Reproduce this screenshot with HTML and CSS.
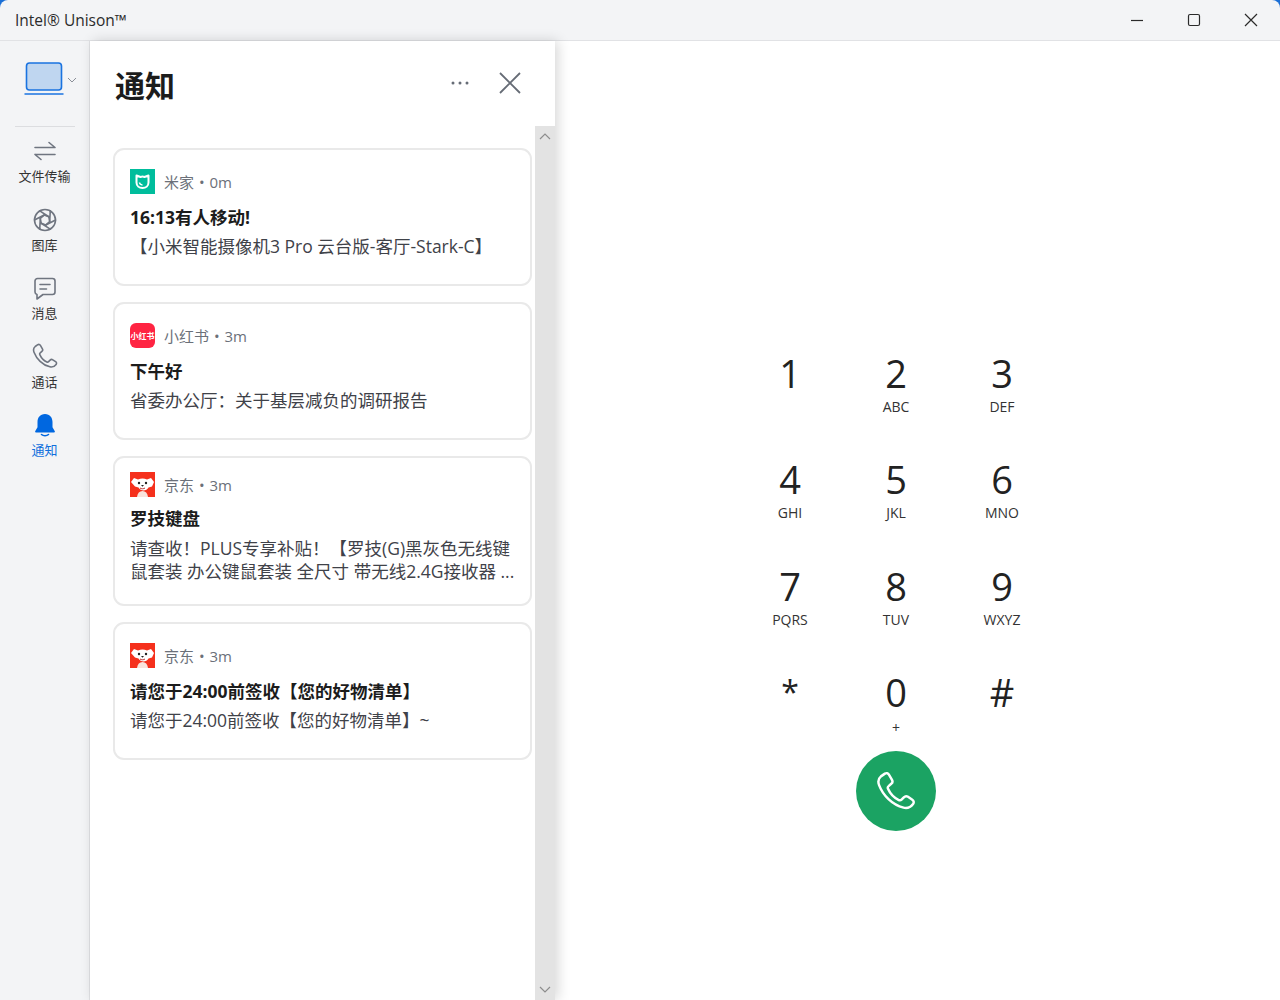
FILE: index.html
```html
<!doctype html>
<html lang="zh-CN">
  <head>
    <meta charset="utf-8">
    <title>Intel® Unison™</title>
    <link rel="stylesheet" href="styles.css">
  </head>
  <body>
    <div class="window">
      <header class="titlebar">
        <span class="app-title">Intel® Unison™</span>
        <div class="win-controls">
          <button class="win-btn" type="button">
            <svg width="14" height="14" viewBox="0 0 14 14"><path d="M1 7.5h12" /></svg>
          </button>
          <button class="win-btn" type="button">
            <svg width="14" height="14" viewBox="0 0 14 14"><rect x="1.5" y="1.5" width="11" height="11" rx="1.5" /></svg>
          </button>
          <button class="win-btn" type="button">
            <svg width="14" height="14" viewBox="0 0 14 14"><path d="M1 1l12 12M13 1L1 13" /></svg>
          </button>
        </div>
      </header>

      <div class="main">
        <!-- left rail -->
        <nav class="rail">
          <div class="device">
            <svg width="40" height="34" viewBox="0 0 40 34">
              <rect x="2.5" y="2" width="35" height="27" rx="3" fill="#bfd6f0" stroke="#1a73e0" stroke-width="1.6" />
              <path d="M0.5 33h39" stroke="#1a73e0" stroke-width="1.6" fill="none" />
            </svg>
            <svg class="device-caret" width="10" height="6" viewBox="0 0 10 6"><path d="M1 1l4 4 4-4" /></svg>
          </div>
          <div class="rail-line"></div>

          <a class="rail-item">
            <svg class="rail-icon" width="24" height="24" viewBox="0 0 24 24">
              <path d="M2 8.500h20M16 3.500l6 5M22 15.500H2M8 20.500l-6-5" />
            </svg>
            <span>文件传输</span>
          </a>
          <a class="rail-item">
            <svg class="rail-icon" width="24" height="24" viewBox="0 0 24 24">
              <circle cx="12" cy="12" r="10.500" />
              <path d="M12.870 16.920L8.170 15.210 7.300 10.290 11.130 7.080 15.830 8.790 16.700 13.710z" />
              <path d="M22.500 12L12.870 16.920M17.250 21.090L8.170 15.210M6.750 21.090L7.300 10.290M1.500 12L11.130 7.080M6.750 2.910L15.830 8.790M17.250 2.910L16.700 13.710" />
            </svg>
            <span>图库</span>
          </a>
          <a class="rail-item">
            <svg class="rail-icon" width="24" height="24" viewBox="0 0 24 24">
              <path d="M4.500 2.500h15a2.500 2.500 0 0 1 2.500 2.500v11a2.500 2.500 0 0 1-2.500 2.500H10l-6 4.500v-4.500a2.500 2.500 0 0 1-2-2.500V5a2.500 2.500 0 0 1 2.500-2.500z" />
              <path d="M7 8.500h10M7 13h6.500" />
            </svg>
            <span>消息</span>
          </a>
          <a class="rail-item">
            <svg class="rail-icon" width="26" height="26" viewBox="0 0 26 26">
              <path d="M3.200 3.500l2.600-1.800c1-.6 2-.3 2.600.7l2 3.400c.5.900.3 1.900-.5 2.500L8.200 9.800c-.6.500-.7 1.100-.4 1.800 1.700 3.800 3.700 5.800 7 7.300.7.300 1.300.2 1.800-.3l1.500-1.500c.8-.8 1.800-.9 2.700-.3l2.800 1.900c1 .7 1.200 1.800.5 2.700-1.500 2-3.700 3-6.200 2.400C10.500 22 4.500 15.800 2 9.200 1.200 7 1.600 4.800 3.200 3.500z" />
            </svg>
            <span>通话</span>
          </a>
          <a class="rail-item active">
            <svg class="rail-icon" width="24" height="24" viewBox="0 0 24 24">
              <path class="bell" d="M12 1c-5 0-7.500 3.800-7.500 8v5.200L2.200 18.300c-.3.600 0 1.200.7 1.200h18.200c.7 0 1-.6.700-1.200l-2.300-4.100V9c0-4.200-2.500-8-7.500-8z" />
              <path class="bell-line" d="M8.500 21.500c1.800 1.600 5.200 1.600 7 0" />
            </svg>
            <span>通知</span>
          </a>
        </nav>

        <!-- notification panel -->
        <section class="panel">
          <div class="panel-head">
            <h1>通知</h1>
            <div class="panel-actions">
              <svg class="more" width="18" height="4" viewBox="0 0 18 4">
                <circle cx="2" cy="2" r="1.500" />
                <circle cx="9" cy="2" r="1.500" />
                <circle cx="16" cy="2" r="1.500" />
              </svg>
              <svg class="panel-close" width="22" height="22" viewBox="0 0 22 22"><path d="M1 1l20 20M21 1L1 21" /></svg>
            </div>
          </div>
          <div class="panel-body">
            <div class="cards">
              <article class="card">
                <div class="card-app">
                  <svg class="logo" width="25" height="25" viewBox="0 0 25 25">
                    <rect width="25" height="25" fill="#00bd9c" />
                    <path d="M6.500 6.500l4 1.500c1.300-.5 2.700-.5 4 0l4-1.500v7c0 3.300-2.700 5.500-6 5.500s-6-2.200-6-5.500z" fill="none" stroke="#fff" stroke-width="2" stroke-linejoin="round" />
                    <path d="M9.500 13.500c.2 1.500 1.300 2.400 3 2.400" fill="none" stroke="#fff" stroke-width="1.500" />
                  </svg>
                  <span>米家 • 0m</span>
                </div>
                <div class="card-title">16:13有人移动!</div>
                <div class="card-text">【小米智能摄像机3 Pro 云台版-客厅-Stark-C】</div>
              </article>

              <article class="card">
                <div class="card-app">
                  <div class="logo logo-xhs">小红书</div>
                  <span>小红书 • 3m</span>
                </div>
                <div class="card-title">下午好</div>
                <div class="card-text">省委办公厅：关于基层减负的调研报告</div>
              </article>

              <article class="card card-long">
                <div class="card-app">
                  <svg class="logo" width="25" height="25" viewBox="0 0 25 25">
                    <use href="#jd-logo" />
                  </svg>
                  <span>京东 • 3m</span>
                </div>
                <div class="card-title">罗技键盘</div>
                <div class="card-text">请查收！PLUS专享补贴！【罗技(G)黑灰色无线键鼠套装 办公键鼠套装 全尺寸 带无线2.4G接收器 ...</div>
              </article>

              <article class="card">
                <div class="card-app">
                  <svg class="logo" width="25" height="25" viewBox="0 0 25 25">
                    <use href="#jd-logo" />
                  </svg>
                  <span>京东 • 3m</span>
                </div>
                <div class="card-title">请您于24:00前签收【您的好物清单】</div>
                <div class="card-text">请您于24:00前签收【您的好物清单】~</div>
              </article>
            </div>
            <div class="scrollbar">
              <svg width="12" height="7" viewBox="0 0 12 7"><path d="M1 6l5-5 5 5" /></svg>
              <svg width="12" height="7" viewBox="0 0 12 7"><path d="M1 1l5 5 5-5" /></svg>
            </div>
          </div>
        </section>

        <!-- dial pad -->
        <section class="dialer">
          <div class="keys">
            <div class="key"><b>1</b><small>&nbsp;</small></div>
            <div class="key"><b>2</b><small>ABC</small></div>
            <div class="key"><b>3</b><small>DEF</small></div>
            <div class="key"><b>4</b><small>GHI</small></div>
            <div class="key"><b>5</b><small>JKL</small></div>
            <div class="key"><b>6</b><small>MNO</small></div>
            <div class="key"><b>7</b><small>PQRS</small></div>
            <div class="key"><b>8</b><small>TUV</small></div>
            <div class="key"><b>9</b><small>WXYZ</small></div>
            <div class="key key-star"><b>*</b><small>&nbsp;</small></div>
            <div class="key key-plus"><b>0</b><small>+</small></div>
            <div class="key"><b>#</b><small>&nbsp;</small></div>
          </div>
          <button class="call" type="button">
            <svg width="40" height="40" viewBox="0 0 26 26">
              <path d="M3.200 3.500l2.600-1.800c1-.6 2-.3 2.600.7l2 3.400c.5.900.3 1.900-.5 2.500L8.200 9.800c-.6.500-.7 1.100-.4 1.800 1.700 3.800 3.700 5.800 7 7.300.7.300 1.300.2 1.800-.3l1.500-1.500c.8-.8 1.800-.9 2.700-.3l2.800 1.900c1 .7 1.200 1.800.5 2.700-1.500 2-3.700 3-6.200 2.400C10.500 22 4.500 15.800 2 9.200 1.200 7 1.600 4.800 3.200 3.500z" />
            </svg>
          </button>
        </section>
      </div>
    </div>

    <!-- shared JD logo -->
    <svg class="defs" width="0" height="0">
      <symbol id="jd-logo" viewBox="0 0 25 25">
        <rect width="25" height="25" fill="#f5301c" />
        <path d="M1 10l3-4 4 1.500c3-1.500 6-1.500 9 0l4-1.500 3 4-2 4.500-3.500 1c-1 2-3 3-5 3s-4-1-5-3l-3.500-1z" fill="#fff" />
        <path d="M7 25c.5-4 2.500-6 5.500-6s5 2 5.500 6z" fill="#f9e3dc" />
        <circle cx="9" cy="11" r="1.200" fill="#222" />
        <circle cx="16" cy="11" r="1.200" fill="#222" />
        <path d="M11 13h3l-1.500 1.800z" fill="#222" />
        <path d="M10 16c1.500 1 3.500 1 5 0" fill="none" stroke="#b33" stroke-width="1" />
      </symbol>
    </svg>
  </body>
</html>
```

FILE: styles.css
```css
* {
  box-sizing: border-box;
}
html, body {
  height: 100%;
}
body {
  margin: 0;
  overflow: hidden;
  font-family: "Open Sans", "Noto Sans CJK SC", sans-serif;
  color: #1f1f1f;
}
.defs {
  position: absolute;
}
.window {
  display: flex;
  flex-direction: column;
  height: 1000px;
  background: #1a6fd6;
}

/* title bar */
.titlebar {
  display: flex;
  justify-content: space-between;
  align-items: center;
  flex: none;
  height: 41px;
  padding: 0 1px 0 15px;
  background: #f3f4f6;
  border-bottom: 1px solid #e1e2e5;
  border-radius: 8px 8px 0 0;
}
.app-title {
  font-size: 15.500px;
  color: #2b2b2b;
}
.win-controls {
  display: flex;
}
.win-btn {
  display: flex;
  align-items: center;
  justify-content: center;
  width: 57px;
  height: 40px;
  padding: 0;
  background: none;
  border: 0;
}
.win-btn svg {
  fill: none;
  stroke: #2a2a2a;
  stroke-width: 1.2;
}

.main {
  display: flex;
  flex: 1;
  min-height: 0;
  background: #fff;
}

/* left rail */
.rail {
  display: flex;
  flex-direction: column;
  align-items: center;
  flex: none;
  width: 90px;
  background: #f3f4f6;
  border-right: 1px solid #e1e2e5;
}
.device {
  display: flex;
  align-items: center;
  gap: 3px;
  height: 85px;
  padding-left: 12px;
  padding-bottom: 12px;
}
.device-caret {
  margin-top: 5px;
  fill: none;
  stroke: #8a8f98;
}
.rail-line {
  width: 60px;
  height: 1px;
  background: #dcdde0;
}
.rail-item {
  display: flex;
  flex-direction: column;
  align-items: center;
  justify-content: flex-end;
  width: 100%;
  height: 68.500px;
  font-size: 13px;
  line-height: 18px;
  color: #333;
  padding-bottom: 8px;
}
.rail-item:first-of-type {
  height: 66px;
}
.rail-icon {
  margin-bottom: 4px;
  fill: none;
  stroke: #6f7580;
  stroke-width: 1.6;
  stroke-linecap: round;
  stroke-linejoin: round;
}
.rail-item.active {
  color: #0f6fdc;
}
.rail-item .bell {
  fill: #0067e0;
  stroke: none;
}
.rail-item .bell-line {
  stroke: #0067e0;
}

/* notification panel */
.panel {
  display: flex;
  flex-direction: column;
  flex: none;
  width: 465px;
  background: #fff;
  box-shadow: 3px 0 12px rgba(0, 0, 0, 0.16);
  position: relative;
}
.panel-head {
  display: flex;
  justify-content: space-between;
  align-items: center;
  flex: none;
  height: 85px;
  padding: 0 34px 0 25px;
}
.panel-head h1 {
  margin: 0;
  font-size: 30px;
  font-weight: 700;
  color: #1c1c1c;
}
.panel-actions {
  display: flex;
  align-items: center;
  gap: 30px;
  margin-top: -2px;
}
.more {
  fill: #666c76;
}
.panel-close {
  fill: none;
  stroke: #666c76;
  stroke-width: 1.8;
}
.panel-body {
  display: flex;
  flex: 1;
  min-height: 0;
}
.cards {
  display: flex;
  flex-direction: column;
  gap: 16px;
  flex: 1;
  padding: 22px 3px 0 23px;
}
.scrollbar {
  display: flex;
  flex-direction: column;
  justify-content: space-between;
  align-items: center;
  flex: none;
  width: 20px;
  padding: 7px 0;
  background: #e3e3e3;
}
.scrollbar svg {
  fill: none;
  stroke: #8d8d8d;
  stroke-width: 1.2;
}
.card {
  height: 138px;
  padding: 19px 15px 0;
  background: #fff;
  border: 2px solid #e9e9e9;
  border-radius: 11px;
}
.card-long {
  height: 150px;
  padding-top: 14px;
}
.card-app {
  display: flex;
  align-items: center;
  gap: 9px;
  height: 25px;
  font-size: 15px;
  word-spacing: 1px;
  color: #6b7079;
}
.logo {
  display: block;
  flex: none;
  width: 25px;
  height: 25px;
}
.logo-xhs {
  background: #ff2442;
  border-radius: 6px;
  color: #fff;
  font-size: 8px;
  font-weight: 700;
  line-height: 25px;
  text-align: center;
  white-space: nowrap;
}
.card-title {
  margin-top: 9px;
  font-size: 17.500px;
  font-weight: 700;
  line-height: 28px;
  color: #1c1c1c;
}
.card-text {
  margin-top: 4px;
  font-size: 17.500px;
  line-height: 23px;
  color: #3f4249;
}
.card-long .card-title {
  margin-top: 7px;
}
.card-long .card-text {
  margin-top: 5px;
}

/* dial pad */
.dialer {
  display: flex;
  flex-direction: column;
  align-items: center;
  flex: 1;
  padding: 306px 43px 0 0;
}
.keys {
  display: grid;
  grid-template-columns: repeat(3, 106px);
  grid-auto-rows: 106.300px;
}
.key {
  display: flex;
  flex-direction: column;
  align-items: center;
}
.key b {
  font-size: 38px;
  font-weight: 400;
  line-height: 52px;
  color: #222;
}
.key small {
  margin-top: -3px;
  font-size: 14px;
  line-height: 22px;
  color: #333;
}
.key-star b {
  font-size: 32px;
}
.key-plus small {
  margin-top: -1px;
}
.call {
  display: flex;
  align-items: center;
  justify-content: center;
  width: 80px;
  height: 80px;
  margin-top: -21px;
  padding: 0;
  background: #1ba363;
  border: 0;
  border-radius: 50%;
}
.call svg {
  fill: none;
  stroke: #fff;
  stroke-width: 1.600;
  stroke-linejoin: round;
}
```
